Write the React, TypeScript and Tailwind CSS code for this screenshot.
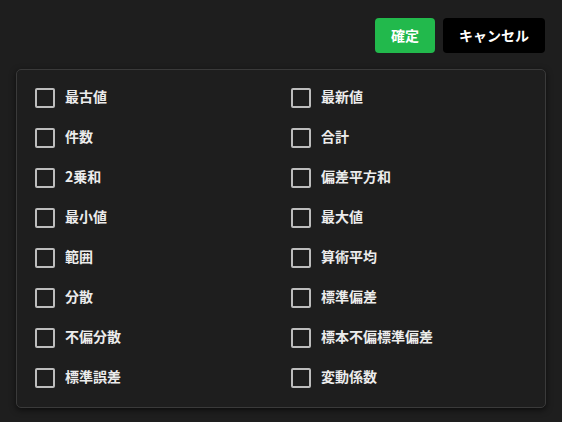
import React, { useState } from 'react';

const LEFT = ['最古値', '件数', '2乗和', '最小値', '範囲', '分散', '不偏分散', '標準誤差'];
const RIGHT = ['最新値', '合計', '偏差平方和', '最大値', '算術平均', '標準偏差', '標本不偏標準偏差', '変動係数'];

const Check: React.FC<{ label: string; checked: boolean; onToggle: () => void }> = ({ label, checked, onToggle }) => (
  <label className="flex h-10 cursor-pointer items-center gap-[10px]" onClick={onToggle}>
    <span className="flex h-5 w-5 items-center justify-center rounded-[2px] border-2 border-[#bdbdbd]">
      {checked && <span className="h-2.5 w-2.5 bg-[#bdbdbd]" />}
    </span>
    <span className="-translate-y-[2px] text-[14px] leading-5 font-semibold text-[#ececec]">{label}</span>
  </label>
);

export default function App() {
  const [checked, setChecked] = useState<Record<string, boolean>>({});
  const toggle = (k: string) => setChecked(prev => ({ ...prev, [k]: !prev[k] }));

  const rows = LEFT.map((l, i) => [l, RIGHT[i]]);

  return (
    <div
      className="flex h-[422px] w-[562px] flex-col bg-[#1e1e1e] px-4 pt-[18px]"
      style={{ fontFamily: '"Noto Sans CJK JP", "Noto Sans", sans-serif' }}
    >
      {/* Actions */}
      <div className="flex justify-end gap-2 pr-px">
        <button className="h-[35px] w-[60px] rounded-[4px] bg-[#22b94c] text-[14px] font-semibold text-white">確定</button>
        <button className="h-[35px] w-[102px] rounded-[4px] bg-black text-[14px] font-semibold text-white">キャンセル</button>
      </div>

      {/* Options */}
      <div className="mt-4 rounded-[5px] border border-[#3a3a3a] bg-[#1e1e1e] pt-2 pb-[9px] pl-[18px] shadow-[0_2px_6px_rgba(0,0,0,0.6)]">
        {rows.map(([l, r]) => (
          <div key={l} className="grid grid-cols-[256px_1fr]">
            <Check label={l} checked={!!checked[l]} onToggle={() => toggle(l)} />
            <Check label={r} checked={!!checked[r]} onToggle={() => toggle(r)} />
          </div>
        ))}
      </div>
    </div>
  );
}
